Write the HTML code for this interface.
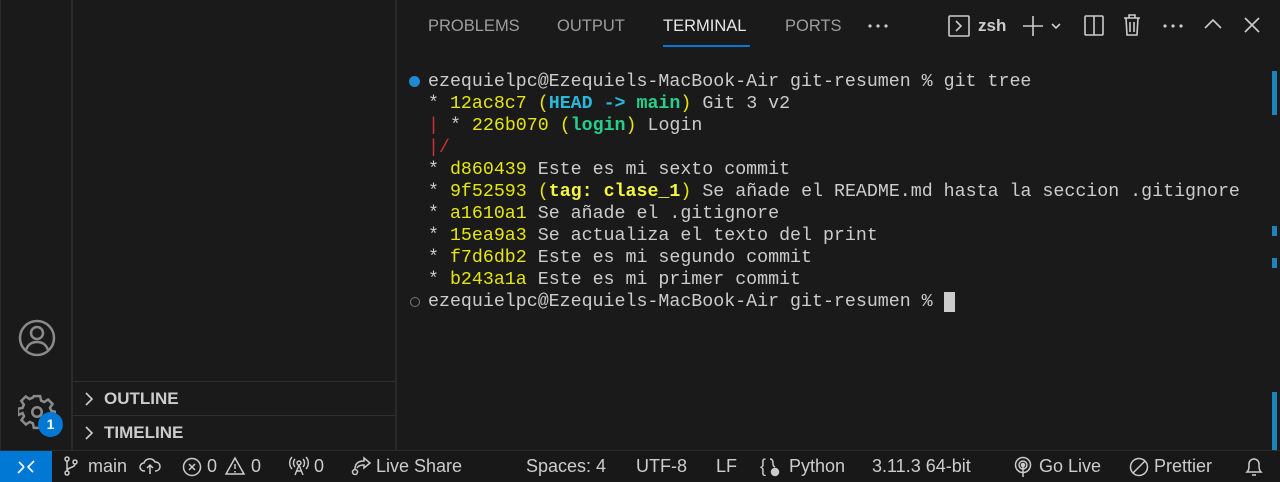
<!DOCTYPE html>
<html><head><meta charset="utf-8"><style>
*{margin:0;padding:0;box-sizing:border-box}
body{width:1280px;height:481px;background:#1a1a1a;font-family:"Liberation Sans",sans-serif;color:#ccc;position:relative;overflow:hidden}
.abar{position:absolute;left:0;top:0;width:73px;height:450px;background:#1a1a1a;border-right:2px solid #2a2a2a;border-left:1px solid #2a2a2a}
.side{position:absolute;left:73px;top:0;width:324px;height:450px;border-right:2px solid #2a2a2a}
.sec{position:absolute;left:0;width:322px;height:34px;border-top:1px solid #2e2e2e;font-weight:bold;font-size:17px;color:#ccc;padding-left:31px;line-height:34px}
.sec svg{position:absolute;left:10px;top:10px}
.tabs{position:absolute;top:17px;left:428px;font-size:16.5px;color:#9d9d9d}
.tabs span{position:absolute;white-space:nowrap}
.term{position:absolute;left:428px;top:71px;font-family:"Liberation Mono",monospace;font-size:18.3px;line-height:22px;color:#ccc;white-space:pre}
.y{color:#e5e510}.c{color:#29b8db;font-weight:bold}.g{color:#23d18b;font-weight:bold}.yb{color:#f5f543;font-weight:bold}.r{color:#cd3131}
.status{position:absolute;left:0;top:450px;width:1280px;height:31px;background:#181818;border-top:1px solid #2b2b2b;font-size:18px;color:#ccc}
.status span{position:absolute;top:5px;white-space:nowrap}
.status svg{position:absolute}
.rem{position:absolute;left:0;top:0;width:52px;height:31px;background:#0078d4}
</style></head><body>
<div class="abar">
<svg style="position:absolute;left:17px;top:319px" width="38" height="38" viewBox="0 0 38 38" fill="none" stroke="#8a8a8a" stroke-width="2.5"><circle cx="19" cy="19" r="17"/><circle cx="19" cy="14" r="6"/><path d="M8 31c2-6 6-8 11-8s9 2 11 8"/></svg>
<svg style="position:absolute;left:17px;top:393px" width="38" height="38" viewBox="0 0 24 24" fill="none" stroke="#8a8a8a" stroke-width="1.6"><path d="M10 2h4l.6 2.8 2 .9 2.4-1.6 2.8 2.8-1.6 2.4.9 2 2.8.6v4l-2.8.6-.9 2 1.6 2.4-2.8 2.8-2.4-1.6-2 .9L14 22h-4l-.6-2.8-2-.9-2.4 1.6-2.8-2.8 1.6-2.4-.9-2L0 14v-4l2.8-.6.9-2L2.1 5 4.9 2.2l2.4 1.6 2-.9z"/><circle cx="12" cy="12" r="3"/></svg>
<div style="position:absolute;left:37px;top:412px;width:25px;height:25px;border-radius:50%;background:#0078d4;color:#fff;font-size:14px;font-weight:bold;text-align:center;line-height:25px">1</div>
</div>
<div class="side">
<div class="sec" style="top:381px"><svg width="12" height="14" viewBox="0 0 12 14" fill="none" stroke="#ccc" stroke-width="1.6"><path d="M3 1l6 6-6 6"/></svg>OUTLINE</div>
<div class="sec" style="top:415px"><svg width="12" height="14" viewBox="0 0 12 14" fill="none" stroke="#ccc" stroke-width="1.6"><path d="M3 1l6 6-6 6"/></svg>TIMELINE</div>
</div>
<div class="tabs">
<span style="left:0">PROBLEMS</span>
<span style="left:129px">OUTPUT</span>
<span style="left:235px;color:#e7e7e7">TERMINAL</span>
<span style="left:357px">PORTS</span>
</div>
<svg style="position:absolute;left:868px;top:24px" width="20" height="4"><circle cx="2" cy="2" r="1.6" fill="#ccc"/><circle cx="10" cy="2" r="1.6" fill="#ccc"/><circle cx="18" cy="2" r="1.6" fill="#ccc"/></svg>
<div style="position:absolute;left:663px;top:45px;width:87px;height:2px;background:#0078d4"></div>
<svg style="position:absolute;left:948px;top:15px" width="22" height="22" viewBox="0 0 22 22" fill="none" stroke="#ccc" stroke-width="1.6"><rect x="1" y="1" width="20" height="20" rx="1"/><path d="M8 6l5 5-5 5"/></svg>
<span style="position:absolute;left:978px;top:16px;font-size:17px;color:#ccc;font-weight:bold">zsh</span>
<svg style="position:absolute;left:1022px;top:15px" width="44" height="22" viewBox="0 0 44 22" fill="none" stroke="#ccc" stroke-width="1.6"><path d="M11 1v20M1 11h20M30 9l4 4 4-4"/></svg>
<svg style="position:absolute;left:1084px;top:15px" width="20" height="22" viewBox="0 0 20 22" fill="none" stroke="#ccc" stroke-width="1.6"><rect x="1" y="1" width="18" height="19" rx="1"/><path d="M10 1v19"/></svg>
<svg style="position:absolute;left:1123px;top:14px" width="18" height="22" viewBox="0 0 18 22" fill="none" stroke="#ccc" stroke-width="1.6"><path d="M1 4h16M6 4V1h6v3M3 4l1 17h10l1-17M7 8v10M11 8v10"/></svg>
<svg style="position:absolute;left:1163px;top:24px" width="20" height="4"><circle cx="2" cy="2" r="1.6" fill="#ccc"/><circle cx="10" cy="2" r="1.6" fill="#ccc"/><circle cx="18" cy="2" r="1.6" fill="#ccc"/></svg>
<svg style="position:absolute;left:1204px;top:18px" width="18" height="12" viewBox="0 0 18 12" fill="none" stroke="#ccc" stroke-width="1.6"><path d="M1 10l8-8 8 8"/></svg>
<svg style="position:absolute;left:1244px;top:17px" width="16" height="16" viewBox="0 0 16 16" fill="none" stroke="#ccc" stroke-width="1.6"><path d="M1 1l14 14M15 1L1 15"/></svg>
<div style="position:absolute;left:409px;top:76px;width:11px;height:11px;border-radius:50%;background:#1f8ad2"></div>
<div style="position:absolute;left:410px;top:297px;width:10px;height:10px;border-radius:50%;border:1.5px solid #777"></div>
<div class="term">ezequielpc@Ezequiels-MacBook-Air git-resumen % git tree
* <span class="y">12ac8c7</span> <span class="y">(</span><span class="c">HEAD -&gt; </span><span class="g">main</span><span class="y">)</span> Git 3 v2
<span class="r">|</span> * <span class="y">226b070</span> <span class="y">(</span><span class="g">login</span><span class="y">)</span> Login
<span class="r">|/</span>
* <span class="y">d860439</span> Este es mi sexto commit
* <span class="y">9f52593</span> <span class="y">(</span><span class="yb">tag: clase_1</span><span class="y">)</span> Se añade el README.md hasta la seccion .gitignore
* <span class="y">a1610a1</span> Se añade el .gitignore
* <span class="y">15ea9a3</span> Se actualiza el texto del print
* <span class="y">f7d6db2</span> Este es mi segundo commit
* <span class="y">b243a1a</span> Este es mi primer commit
ezequielpc@Ezequiels-MacBook-Air git-resumen % <span style="background:#ccc"> </span></div>
<div style="position:absolute;left:1272px;top:71px;width:5px;height:44px;background:#1a85b8"></div>
<div style="position:absolute;left:1272px;top:226px;width:5px;height:10px;background:#1a85b8"></div>
<div style="position:absolute;left:1272px;top:258px;width:5px;height:10px;background:#1a85b8"></div>
<div style="position:absolute;left:1272px;top:392px;width:5px;height:58px;background:#1a85b8"></div>
<div class="status">
<div class="rem"><svg style="left:16px;top:8px" width="20" height="16" viewBox="0 0 20 16" fill="none" stroke="#fff" stroke-width="1.6"><path d="M2 14l6-6M8 8L3 3M18 2l-6 6 5 5"/></svg></div>
<svg style="left:63px;top:5px" width="16" height="20" viewBox="0 0 16 20" fill="none" stroke="#ccc" stroke-width="1.5"><circle cx="4" cy="3" r="2"/><circle cx="4" cy="17" r="2"/><circle cx="12" cy="6" r="2"/><path d="M4 5v10M12 8c0 4-8 3-8 7"/></svg>
<span style="left:88px">main</span>
<svg style="left:139px;top:6px" width="22" height="18" viewBox="0 0 22 18" fill="none" stroke="#ccc" stroke-width="1.5"><path d="M6 14H5a4 4 0 0 1 0-8 6 6 0 0 1 11-1 4.5 4.5 0 0 1 1 9h-1M11 17V9M8 11l3-3 3 3"/></svg>
<svg style="left:182px;top:6px" width="20" height="20" viewBox="0 0 20 20" fill="none" stroke="#ccc" stroke-width="1.5"><circle cx="10" cy="10" r="8.5"/><path d="M7 7l6 6M13 7l-6 6"/></svg>
<span style="left:207px">0</span>
<svg style="left:225px;top:5px" width="20" height="20" viewBox="0 0 20 20" fill="none" stroke="#ccc" stroke-width="1.5"><path d="M10 2L1 18h18z M10 8v5M10 15v1.5"/></svg>
<span style="left:251px">0</span>
<svg style="left:288px;top:5px" width="22" height="20" viewBox="0 0 22 20" fill="none" stroke="#ccc" stroke-width="1.4"><circle cx="11" cy="7" r="2"/><path d="M7 3a6 6 0 0 0 0 8M15 3a6 6 0 0 1 0 8M4 1a9 9 0 0 0 0 12M18 1a9 9 0 0 1 0 12M11 9l-4 10M11 9l4 10M8 15h6"/></svg>
<span style="left:314px">0</span>
<svg style="left:350px;top:5px" width="22" height="20" viewBox="0 0 22 20" fill="none" stroke="#ccc" stroke-width="1.5"><circle cx="5" cy="16" r="2.5"/><path d="M5 13c0-6 4-8 9-8V2l6 5-6 5V9c-4 0-6 1-7 3"/></svg>
<span style="left:376px">Live Share</span>
<span style="left:526px">Spaces: 4</span>
<span style="left:636px">UTF-8</span>
<span style="left:716px">LF</span>
<span style="left:760px">{</span>
<svg style="left:768px;top:6px" width="12" height="20" viewBox="0 0 12 20" fill="none" stroke="#ccc" stroke-width="1.5"><path d="M2 2c3 0 3 3 3 5s2 3 2 3"/><circle cx="7" cy="15" r="3.5" fill="#ccc"/></svg>
<span style="left:789px">Python</span>
<span style="left:872px">3.11.3 64-bit</span>
<svg style="left:1014px;top:5px" width="18" height="22" viewBox="0 0 18 22" fill="none" stroke="#ccc" stroke-width="1.5"><circle cx="9" cy="9" r="7.5"/><circle cx="9" cy="9" r="4"/><circle cx="9" cy="9" r="1.5" fill="#ccc"/><path d="M9 11v10"/></svg>
<span style="left:1039px">Go Live</span>
<svg style="left:1129px;top:6px" width="20" height="20" viewBox="0 0 20 20" fill="none" stroke="#ccc" stroke-width="1.5"><circle cx="10" cy="10" r="8.5"/><path d="M4 16L16 4"/></svg>
<span style="left:1154px">Prettier</span>
<svg style="left:1244px;top:5px" width="20" height="22" viewBox="0 0 20 22" fill="none" stroke="#ccc" stroke-width="1.5"><path d="M3 16c2-2 2-4 2-8a5 5 0 0 1 10 0c0 4 0 6 2 8zM8 19h4"/></svg>
</div>
</body></html>
